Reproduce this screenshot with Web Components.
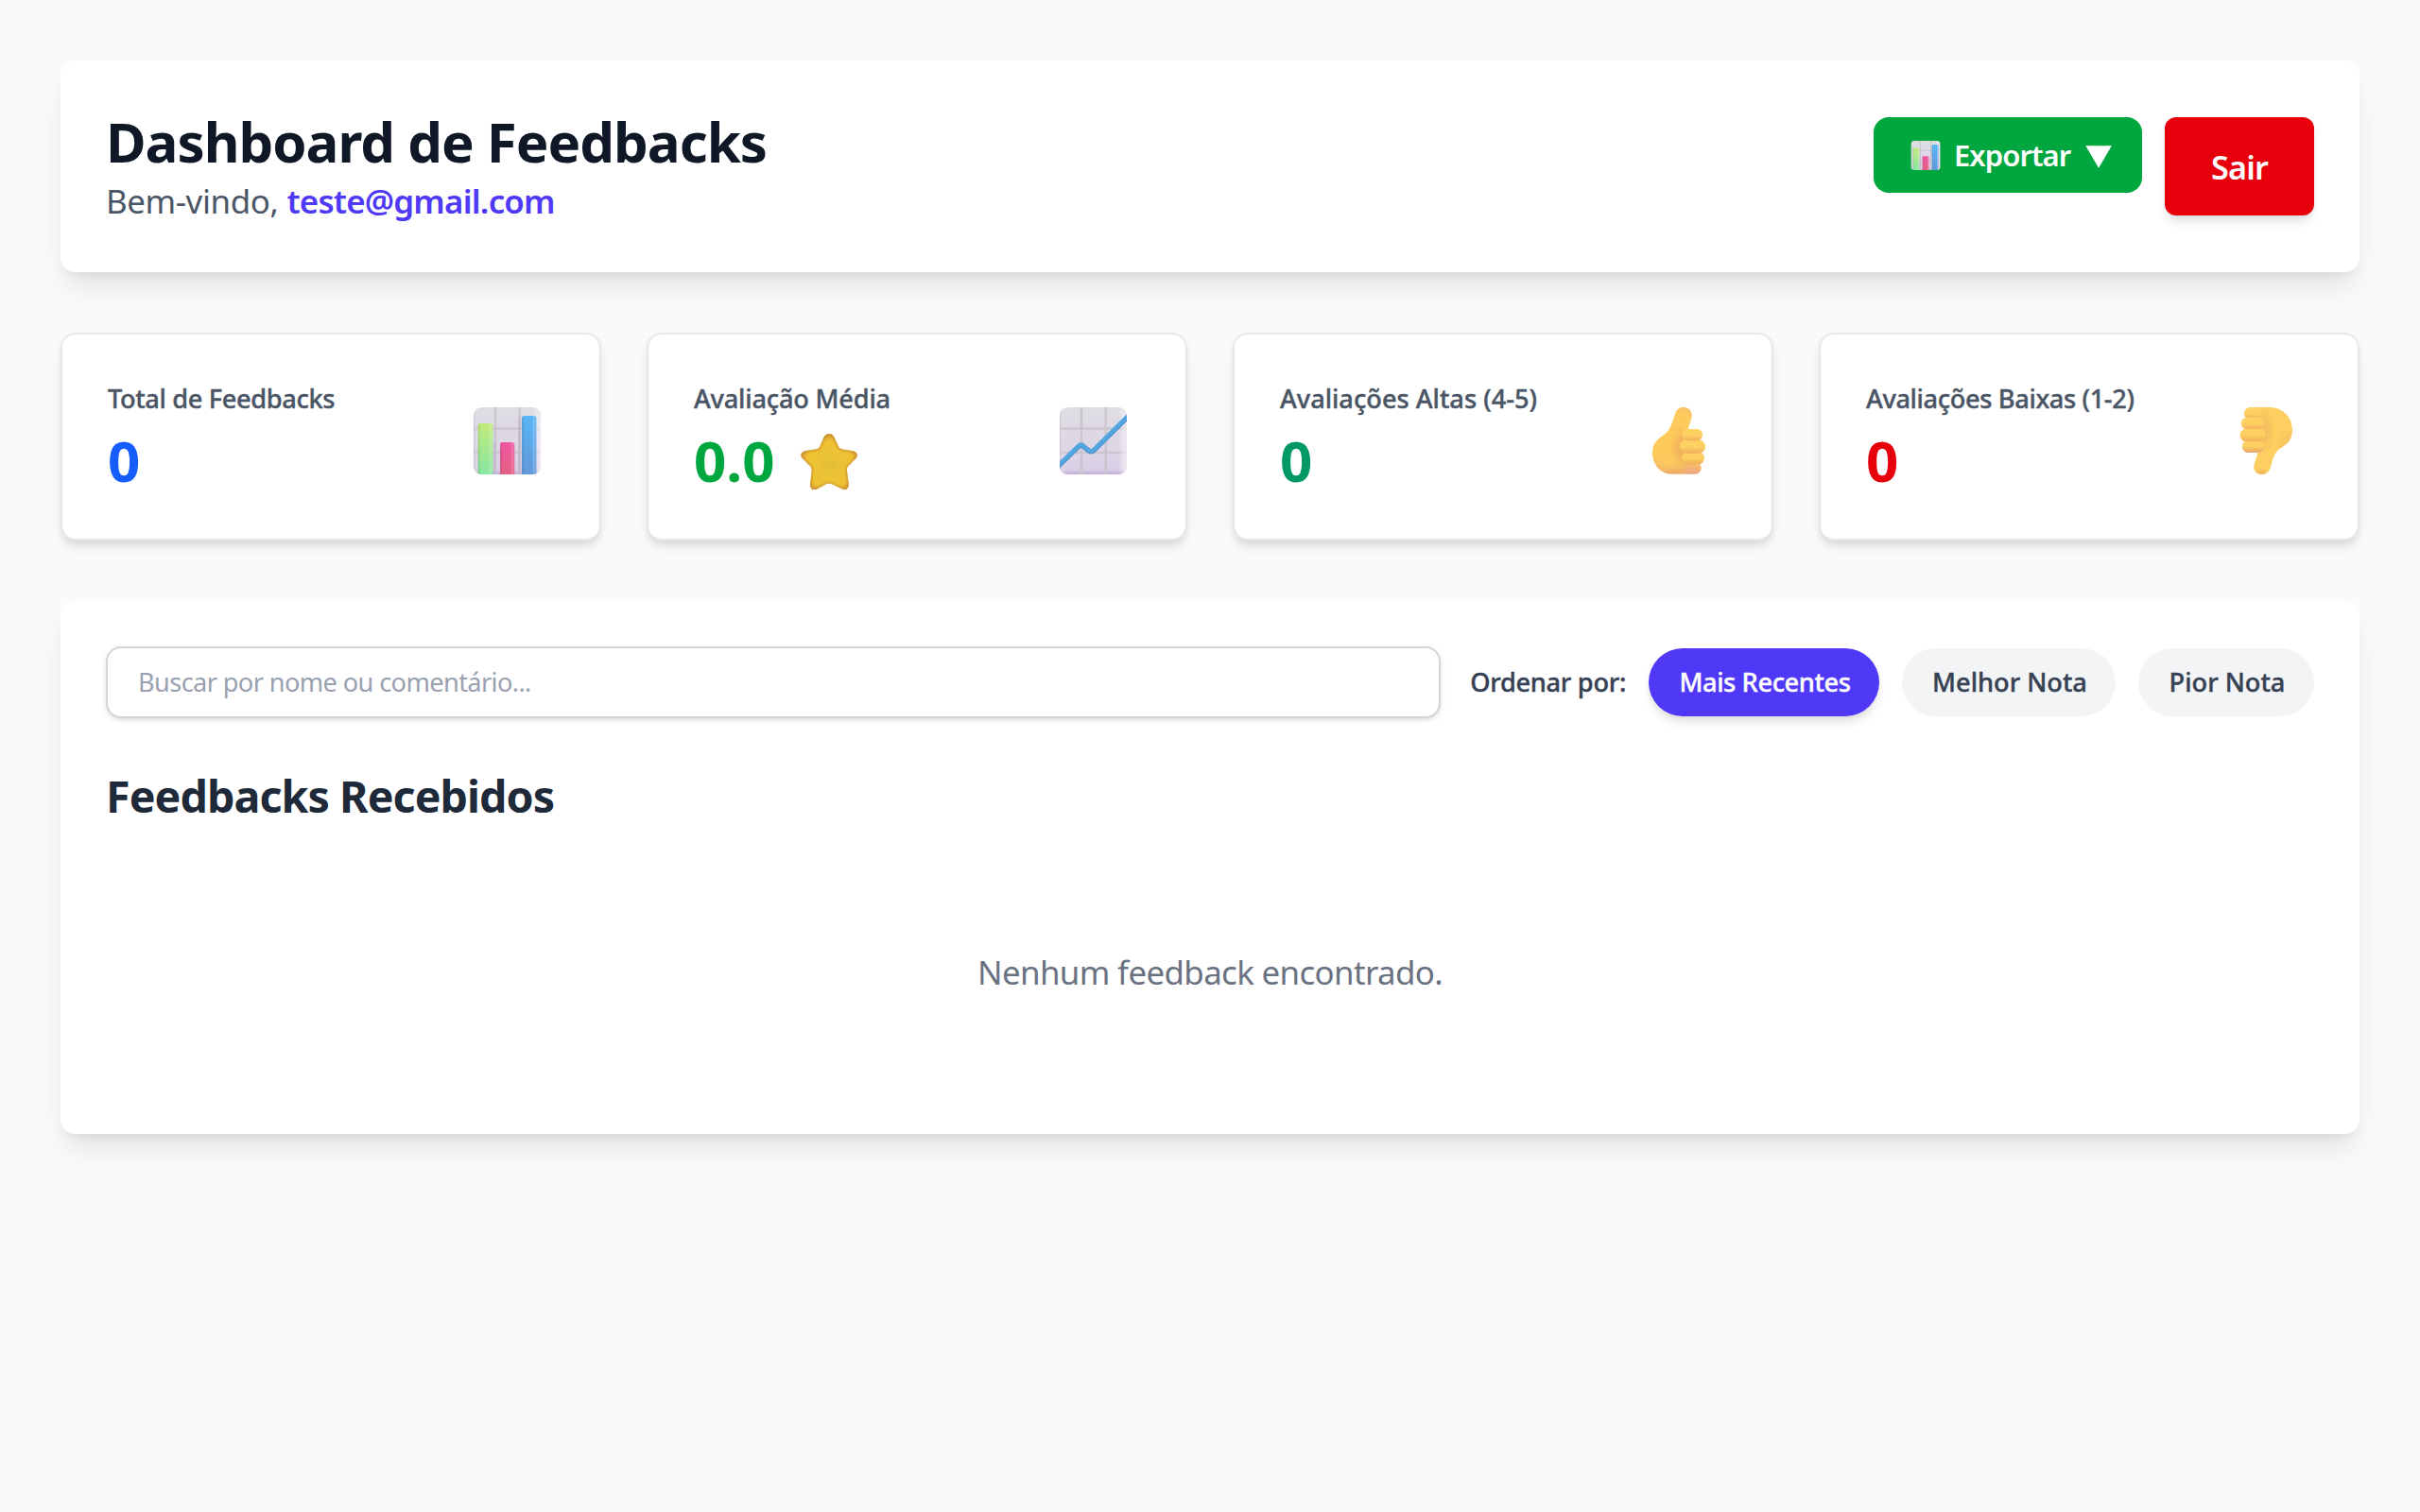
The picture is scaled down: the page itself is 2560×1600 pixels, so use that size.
<!DOCTYPE html>
<html lang="pt-BR">
<head>
<meta charset="utf-8">
<title>Dashboard de Feedbacks</title>
<style>
html,body{margin:0;min-height:100%;background:#f9fafb;font-family:"Noto Sans","Open Sans",sans-serif}
</style>
</head>
<body>
<feedback-dashboard></feedback-dashboard>
<script>
const define=(name,html)=>customElements.define(name,class extends HTMLElement{
  constructor(){
    super();
    const t=document.createElement('template');
    t.innerHTML=html;
    this.attachShadow({mode:'open'}).append(t.content.cloneNode(true));
  }
});

const board=`<defs>
<clipPath id="c"><rect width="213" height="213" rx="26"/></clipPath>
<linearGradient id="bg" x2="0" y2="1"><stop stop-color="#dfdde3"/><stop offset=".6" stop-color="#ddd6e6"/><stop offset=".93" stop-color="#dacfe6"/><stop offset="1" stop-color="#bfaad6"/></linearGradient>
<linearGradient id="sh"><stop stop-color="#beb8c6" stop-opacity=".6"/><stop offset=".08" stop-color="#fff" stop-opacity="0"/><stop offset=".88" stop-color="#fff" stop-opacity="0"/><stop offset="1" stop-color="#f3eaf2" stop-opacity=".8"/></linearGradient>
<linearGradient id="g" x2="0" y2="1"><stop stop-color="#c2ec7c"/><stop offset="1" stop-color="#84e5a6"/></linearGradient>
<linearGradient id="p" x2="0" y2="1"><stop stop-color="#ee57a0"/><stop offset="1" stop-color="#e3617f"/></linearGradient>
<linearGradient id="b" x2="0" y2="1"><stop stop-color="#5ab6f7"/><stop offset="1" stop-color="#6396d8"/></linearGradient>
<linearGradient id="e"><stop stop-color="#345" stop-opacity=".15"/><stop offset=".2" stop-opacity="0"/><stop offset=".7" stop-color="#fff" stop-opacity="0"/><stop offset=".85" stop-color="#fff" stop-opacity=".22"/><stop offset="1" stop-color="#fff" stop-opacity="0"/></linearGradient>
</defs><g clip-path="url(#c)"><rect width="213" height="213" fill="url(#bg)"/><path d="M69 0V213M146 0V213M0 68H213M0 144H213" stroke="#cac5cd" stroke-width="7"/><rect width="213" height="213" fill="url(#sh)"/>`;

define('emoji-bars',`<style>:host{display:block;width:71px;height:71px;flex:none}svg{display:block;width:100%;height:100%}</style>
<svg viewBox="0 0 213 213">${board}
<path d="M66 110V213M145 34V213" stroke="#a99fba" stroke-width="8" opacity=".28"/>
<rect x="14" y="51" width="47" height="175" rx="8" fill="url(#g)"/><rect x="14" y="51" width="47" height="175" rx="8" fill="url(#e)"/>
<rect x="84" y="111" width="46" height="115" rx="8" fill="url(#p)"/><rect x="84" y="111" width="46" height="115" rx="8" fill="url(#e)"/>
<rect x="153" y="27" width="46" height="200" rx="8" fill="url(#b)"/><rect x="153" y="27" width="46" height="200" rx="8" fill="url(#e)"/></g></svg>`);

define('emoji-trend',`<style>:host{display:block;width:71px;height:71px;flex:none}svg{display:block;width:100%;height:100%}</style>
<svg viewBox="0 0 213 213">${board}
<path d="M-8 190L60 124Q67 117 75 124L91 137Q100 144 109 136L221 25" fill="none" stroke="#4c97d2" stroke-width="16" stroke-linejoin="round"/>
<path d="M-8 188L60 122Q67 115 75 122L91 135Q100 142 109 134L221 23" fill="none" stroke="#55a7e2" stroke-width="10" stroke-linejoin="round"/></g></svg>`);

const skin=`<defs>
<radialGradient id="k" gradientUnits="userSpaceOnUse" cx="85" cy="95" r="125"><stop stop-color="#fdca59"/><stop offset=".65" stop-color="#fdcb5d"/><stop offset="1" stop-color="#f0b06e"/></radialGradient>
<linearGradient id="f" x2="0" y2="1"><stop stop-color="#fed264"/><stop offset=".55" stop-color="#fdce60"/><stop offset="1" stop-color="#efad5e"/></linearGradient>
<linearGradient id="l" x2="0" y2="1"><stop stop-color="#f8c263"/><stop offset="1" stop-color="#eba683"/></linearGradient>
<radialGradient id="s"><stop stop-color="#e39a5c" stop-opacity=".65"/><stop offset="1" stop-color="#e39a5c" stop-opacity="0"/></radialGradient>
</defs>`;

define('emoji-up',`<style>:host{display:block;width:71px;height:71px;flex:none}svg{display:block;width:100%;height:100%}</style>
<svg viewBox="0 0 213 213">${skin}
<clipPath id="u"><path d="M92 24C96 6 108 0 120 0C138 0 148 14 146 30C144 46 136 56 134 72L150 212H80C45 211 21 180 21 145C21 108 45 97 62 84C78 72 84 48 92 24Z"/></clipPath>
<g clip-path="url(#u)"><rect width="213" height="213" fill="url(#k)"/><ellipse cx="114" cy="130" rx="38" ry="72" fill="url(#s)"/><ellipse cx="90" cy="222" rx="70" ry="34" fill="url(#s)"/></g>
<rect x="122" y="174" width="54" height="38" rx="19" fill="url(#l)"/><rect x="114" y="141" width="72" height="40" rx="20" fill="url(#f)"/><rect x="107" y="103" width="82" height="43" rx="21" fill="url(#f)"/><rect x="115" y="69" width="65" height="37" rx="18" fill="url(#f)"/></svg>`);

define('emoji-down',`<style>:host{display:block;width:71px;height:71px;flex:none}svg{display:block;width:100%;height:100%}</style>
<svg viewBox="0 0 213 213">${skin}
<clipPath id="d"><path d="M52 0H118C162 0 192 32 192 72C192 108 168 122 152 131C138 140 131 158 124 186C119 206 107 213 95 213C78 213 68 202 70 186C73 168 80 160 82 142L60 70Z"/></clipPath>
<g clip-path="url(#d)"><rect width="213" height="213" fill="#fdce60"/><ellipse cx="104" cy="74" rx="30" ry="76" fill="url(#s)" opacity=".6"/><ellipse cx="195" cy="125" rx="54" ry="60" fill="url(#s)" opacity=".6"/><ellipse cx="94" cy="216" rx="34" ry="24" fill="url(#s)"/></g>
<rect x="39" y="1" width="55" height="37" rx="18" fill="url(#f)"/><rect x="30" y="32" width="72" height="39" rx="19" fill="url(#f)"/><rect x="33" y="106" width="69" height="38" rx="19" fill="url(#l)"/><rect x="33" y="106" width="69" height="34" rx="17" fill="url(#f)"/><rect x="26" y="68" width="82" height="41" rx="20" fill="url(#f)"/></svg>`);

define('emoji-star',`<style>:host{display:block;width:60px;height:60px;flex:none;margin-top:3px}svg{display:block;width:100%;height:100%}</style>
<svg viewBox="0 0 180 180"><defs><radialGradient id="y" gradientUnits="userSpaceOnUse" cx="92" cy="98" r="92"><stop stop-color="#e3bd36"/><stop offset=".45" stop-color="#ebc334"/><stop offset=".8" stop-color="#f0c232"/><stop offset="1" stop-color="#d9a132"/></radialGradient><filter id="bl"><feGaussianBlur stdDeviation="4"/></filter>
<clipPath id="st"><path id="q" d="M90 0C99 0 104 6 108 14L121 42Q124 48 131 49L163 54C179 56 184 68 175 79L151 103Q146 109 147 116L152 156C154 173 144 182 130 175L99 160Q90 155 81 160L54 175C40 182 29 175 30 160L35 116Q36 109 31 104L6 79C-4 68 1 57 16 54L50 49Q57 48 60 42L72 14C76 5 82 0 90 0Z"/></clipPath></defs>
<g clip-path="url(#st)"><rect width="180" height="180" fill="url(#y)"/><use href="#q" fill="none" stroke="#bd8430" stroke-width="6" filter="url(#bl)"/></g></svg>`);

define('page-header',`<style>
:host{display:flex;box-sizing:border-box;height:224px;padding:48px;border-radius:16px;background:#fff;align-items:center;justify-content:space-between;box-shadow:0 20px 30px -6px #0000001a,0 8px 12px -8px #0000001a}
h1{margin:0;font-size:58.2px;line-height:75px;font-weight:700;letter-spacing:-1px;color:#101828}
p{margin:1px 0 2px;font-size:34.9px;line-height:50px;color:#4a5565;letter-spacing:-.4px;display:flex;gap:9px}
b{font-weight:600;color:#4f39f6;letter-spacing:-.8px}
.actions{display:flex;gap:24px;align-items:flex-start}
</style>
<div><h1>Dashboard de Feedbacks</h1><p><span>Bem-vindo,</span> <b>teste@gmail.com</b></p></div>
<div class="actions"><export-button></export-button><logout-button></logout-button></div>`);

define('export-button',`<style>
button{all:unset;box-sizing:border-box;display:flex;align-items:center;width:284px;height:80px;padding-left:39px;border-radius:16px;background:#00a63e;color:#fff;font-size:31px;font-weight:600;line-height:44px;letter-spacing:-.95px}
emoji-bars{width:32px;height:31px;margin-right:14px}
i{font:36px/44px "DejaVu Sans",sans-serif;letter-spacing:0;margin-left:16px;transform:scaleY(.85)}
</style><button><emoji-bars></emoji-bars><span>Exportar</span><i>▼</i></button>`);

define('logout-button',`<style>
button{all:unset;box-sizing:border-box;display:block;width:158px;height:104px;border-radius:12px;background:#e7000b;color:#fff;font-size:34.2px;font-weight:600;line-height:106px;text-align:center;letter-spacing:-.8px;box-shadow:0 8px 12px -2px #0000001a,0 4px 8px -4px #0000001a}
</style><button>Sair</button>`);

define('stat-card',`<style>
:host{display:flex;flex:1;box-sizing:border-box;height:220px;border:2px solid #e5e7eb;border-radius:16px;background:#fff;padding:48px 62px 48px 48px;justify-content:space-between;align-items:center;box-shadow:0 8px 12px -2px #0000001a,0 4px 8px -4px #0000001a}
.t{height:120px}
.l{font-size:27.2px;line-height:40px;font-weight:500;-webkit-text-stroke:.4px currentColor;color:#4a5565;letter-spacing:var(--ls,0);white-space:nowrap}
.v{display:flex;align-items:center;gap:27px;margin-top:12px;font-size:60px;line-height:66px;font-weight:700;color:var(--c)}
.i{padding-top:9px}
</style><div class="t"><div class="l"><slot name="label"></slot></div><div class="v"><slot></slot></div></div><div class="i"><slot name="icon"></slot></div>`);

define('search-field',`<style>
:host{display:block;width:1412px}
input{all:unset;box-sizing:border-box;display:block;width:100%;height:76px;border:2px solid #d1d5dc;border-radius:16px;padding:0 32px 2px;background:#fff;font-size:27.2px;letter-spacing:-.62px;box-shadow:0 2px 6px #0000001a,0 2px 4px -2px #0000001a}
input::placeholder{color:#99a1af;opacity:1}
</style><input type="text" placeholder="Buscar por nome ou comentário...">`);

define('sort-pill',`<style>
:host{display:block;width:var(--w)}
button{all:unset;box-sizing:border-box;display:block;width:100%;height:72px;padding-left:2px;border-radius:36px;background:#f3f4f6;color:#364153;font-size:27.2px;font-weight:500;-webkit-text-stroke:.4px currentColor;line-height:72px;text-align:center}
:host([active]) button{background:#4f39f6;color:#fff;letter-spacing:-.38px;box-shadow:0 8px 12px -2px #0000001a,0 4px 8px -4px #0000001a}
</style><button><slot></slot></button>`);

define('feedback-panel',`<style>
:host{display:block;box-sizing:border-box;height:564px;padding:48px;border-radius:16px;background:#fff;box-shadow:0 20px 30px -6px #0000001a,0 8px 12px -8px #0000001a}
.bar,.sort{display:flex;align-items:center;justify-content:space-between}
.sort{gap:24px}
.sort>span{padding-bottom:2px;font-size:27.2px;font-weight:500;-webkit-text-stroke:.4px currentColor;color:#364153;letter-spacing:-.3px;white-space:nowrap}
h2{margin:50px 0 0;font-size:46.6px;line-height:64px;font-weight:700;letter-spacing:-.94px;color:#1e2939}
p{margin:130px 0 0;font-size:34.9px;line-height:50px;letter-spacing:-.65px;text-align:center;color:#6a7282}
</style>
<div class="bar"><search-field></search-field><div class="sort"><span>Ordenar por:</span>
<sort-pill active style="--w:244px">Mais Recentes</sort-pill><sort-pill style="--w:226px">Melhor Nota</sort-pill><sort-pill style="--w:186px">Pior Nota</sort-pill></div></div>
<h2>Feedbacks Recebidos</h2><p>Nenhum feedback encontrado.</p>`);

define('feedback-dashboard',`<style>
:host{display:flex;flex-direction:column;gap:64px;padding:64px}
.stats{display:flex;gap:48px}
</style>
<page-header></page-header>
<div class="stats">
<stat-card style="--c:#155dfc;--ls:-.35px"><span slot="label">Total de Feedbacks</span><span>0</span><emoji-bars slot="icon"></emoji-bars></stat-card>
<stat-card style="--c:#00a63e;--ls:-.19px"><span slot="label">Avaliação Média</span><span>0.0</span><emoji-star></emoji-star><emoji-trend slot="icon"></emoji-trend></stat-card>
<stat-card style="--c:#009966"><span slot="label">Avaliações Altas (4-5)</span><span>0</span><emoji-up slot="icon"></emoji-up></stat-card>
<stat-card style="--c:#e7000b;--ls:-.36px"><span slot="label">Avaliações Baixas (1-2)</span><span>0</span><emoji-down slot="icon"></emoji-down></stat-card>
</div>
<feedback-panel></feedback-panel>`);
</script>
</body>
</html>
